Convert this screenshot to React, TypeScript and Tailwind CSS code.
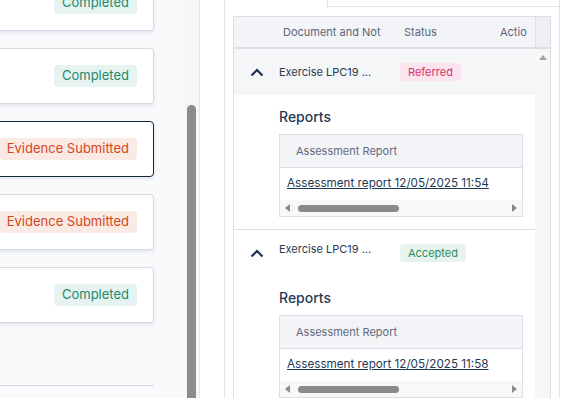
const cards = [
  { status: "Completed", selected: false },
  { status: "Completed", selected: false },
  { status: "Evidence Submitted", selected: true },
  { status: "Evidence Submitted", selected: false },
  { status: "Completed", selected: false },
];

const rows = [
  { title: "Exercise LPC19 ...", status: "Referred", report: "Assessment report 12/05/2025 11:54", active: true },
  { title: "Exercise LPC19 ...", status: "Accepted", report: "Assessment report 12/05/2025 11:58", active: false },
];

const StatusBadge = ({ status }: { status: string }) => {
  const tone =
    status === "Completed"
      ? "bg-[#e6f3f1] text-[#1d8a6c]"
      : "bg-[#fbe9e3] text-[#d4461c]";
  return (
    <span className={`flex h-[22px] items-center rounded-[4px] px-[8px] text-[13px] whitespace-nowrap ${tone}`}>
      {status}
    </span>
  );
};

const SmallBadge = ({ status }: { status: string }) => {
  const tone =
    status === "Referred"
      ? "bg-[#fce4ee] text-[#d6336c]"
      : "bg-[#e6f3ef] text-[#2f8c5a]";
  return (
    <span className={`flex h-[18px] items-center rounded-[4px] px-[8px] text-[11px] whitespace-nowrap ${tone}`}>
      {status}
    </span>
  );
};

const ChevronUp = () => (
  <svg width="14" height="9" viewBox="0 0 14 9" fill="none">
    <path d="M1.5 7.5 L7 2 L12.5 7.5" stroke="#1b3350" strokeWidth="2.2" />
  </svg>
);

const ReportTable = ({ report }: { report: string }) => (
  <div className="ml-[45px] w-[244px] border border-[#dcdfe5]">
    <div className="flex h-[33px] items-center border-b border-[#dcdfe5] bg-[#f3f4f7] pl-[16px] text-[11px] text-[#5f6b7d]">
      Assessment Report
    </div>
    <div className="flex h-[32px] items-center pl-[7px] text-[11.7px] text-[#1f3a55] underline">
      {report}
    </div>
    <div className="flex h-[16px] items-center bg-[#f8f8f8] px-[5px]">
      <svg width="5" height="8" viewBox="0 0 5 8">
        <path d="M5 0 L0 4 L5 8 Z" fill="#8a8a8a" />
      </svg>
      <div className="ml-[8px] h-[7px] w-[101px] rounded-full bg-[#8a8a8a]" />
      <div className="flex-1" />
      <svg width="5" height="8" viewBox="0 0 5 8">
        <path d="M0 0 L5 4 L0 8 Z" fill="#8a8a8a" />
      </svg>
    </div>
  </div>
);

export default function App() {
  return (
    <div className="flex h-[398px] w-[575px] overflow-hidden bg-white font-['Inter',sans-serif]">
      <div className="flex w-[200px] shrink-0 border-r border-[#e3e5ea] bg-[#f9fafc]">
        <div className="flex-1 overflow-hidden">
          <div className="-ml-[150px] -mt-[25px] flex w-[304px] flex-col gap-[17px]">
            {cards.map((card, i) => (
              <div
                key={i}
                className={`flex h-[56px] shrink-0 items-center justify-end rounded-[4px] border bg-white pr-[16px] shadow-[0_2px_4px_rgba(60,70,120,0.12)] ${
                  card.selected ? "border-[#11263a]" : "border-[#d6dae5]"
                }`}
              >
                <StatusBadge status={card.status} />
              </div>
            ))}
            <div className="mt-[45px] border-t border-[#d3d6de]" />
          </div>
        </div>
        <div className="w-[14px] bg-[#f6f6f7] pl-[2px]">
          <div className="mt-[105px] h-[320px] w-[9px] rounded-t-full bg-[#8c8c8c]" />
        </div>
      </div>

      <div className="flex-1 pl-[24px]">
        <div className="flex h-full w-[336px] flex-col overflow-hidden">
          <div className="flex h-[7px] shrink-0">
            <div className="w-[104px] border-x border-[#e1e3e8]" />
            <div className="flex-1 border-b border-r border-[#e1e3e8]" />
          </div>
          <div className="flex-1 border-x border-[#e1e3e8] px-[8px] pt-[9px]">
            <div className="flex h-[420px] flex-col border border-[#dcdfe5]">
              <div className="flex h-[32px] shrink-0 border-b-2 border-[#dcdfe5] bg-[#f3f4f7] text-[11px] text-[#5a6478]">
                <div className="flex flex-1 items-center overflow-hidden whitespace-nowrap">
                  <div className="w-[41px] shrink-0" />
                  <div className="w-[121px] shrink-0 pl-[8px]">Document and Not</div>
                  <div className="w-[96px] shrink-0 pl-[8px]">Status</div>
                  <div className="shrink-0 pl-[8px]">Actio</div>
                </div>
                <div className="w-[15px] border-l border-[#dcdfe5] bg-[#eef0f4]" />
              </div>
              <div className="flex flex-1">
                <div className="flex-1 overflow-hidden">
                  {rows.map((row, i) => (
                    <div key={i} className="border-b border-[#d8dce4] pb-[12px]">
                      <div className={`flex h-[46px] items-center ${row.active ? "bg-[#f5f6f8]" : "bg-white"}`}>
                        <div className="ml-[16px] flex w-[14px] justify-center">
                          <ChevronUp />
                        </div>
                        <div className={`ml-[15px] w-[121px] shrink-0 text-[11px] text-[#2a3b4d] ${row.active ? "" : "-mt-[7px]"}`}>
                          {row.title}
                        </div>
                        <SmallBadge status={row.status} />
                      </div>
                      <div className="ml-[45px] pb-[9px] pt-[13px] text-[14px] leading-[17px] font-medium text-[#1f3a55]">
                        Reports
                      </div>
                      <ReportTable report={row.report} />
                    </div>
                  ))}
                </div>
                <div className="flex w-[15px] justify-center bg-[#f7f7f7] pt-[6px]">
                  <svg width="8" height="5" viewBox="0 0 8 5">
                    <path d="M0 5 L4 0 L8 5 Z" fill="#a3a3a3" />
                  </svg>
                </div>
              </div>
            </div>
          </div>
        </div>
      </div>
    </div>
  );
}
